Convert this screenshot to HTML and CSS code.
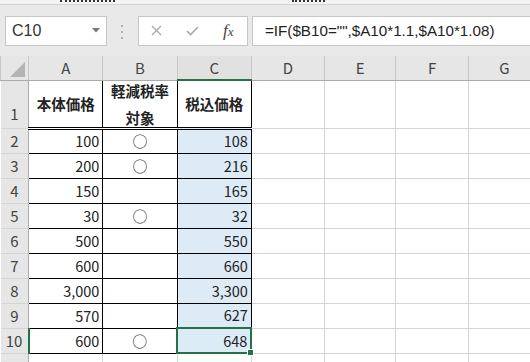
FILE: index.html
```html
<!DOCTYPE html>
<html lang="ja">
<head>
  <meta charset="UTF-8" />
  <title>税込価格</title>
  <link rel="stylesheet" href="styles.css">
</head>
<body>
  <div class="ribbon-edge">
    <span class="cut cut-left"></span>
    <span class="cut cut-right"></span>
  </div>

  <div class="formula-bar">
    <div class="name-box">
      <span>C10</span>
      <svg class="caret" width="8" height="5" viewBox="0 0 8 5"><path d="M0 0 H8 L4 4.5 Z" fill="#777"/></svg>
    </div>
    <div class="grip">
      <svg width="3" height="14" viewBox="0 0 3 14"><rect x="0" y="0" width="2" height="2" fill="#b3b3b3"/><rect x="0" y="6" width="2" height="2" fill="#b3b3b3"/><rect x="0" y="12" width="2" height="2" fill="#b3b3b3"/></svg>
    </div>
    <div class="fx-buttons">
      <svg width="11" height="11" viewBox="0 0 11 11"><path d="M1 1 L10 10 M10 1 L1 10" stroke="#a9a9a9" stroke-width="1.3"/></svg>
      <svg width="13" height="10" viewBox="0 0 13 10"><path d="M1 5 L4.5 8.5 L12 1" stroke="#a9a9a9" stroke-width="1.6" fill="none"/></svg>
      <span class="fx">f<i>x</i></span>
    </div>
    <div class="formula-input">=IF($B10="",$A10*1.1,$A10*1.08)</div>
  </div>

  <table class="sheet">
    <colgroup>
      <col class="col-head">
      <col class="col-a"><col class="col-b"><col class="col-c">
      <col class="col-d"><col class="col-e"><col class="col-f"><col class="col-g">
    </colgroup>
    <thead>
      <tr>
        <th class="corner"><div class="tri"></div></th>
        <th>A</th><th>B</th><th class="sel">C</th><th>D</th><th>E</th><th>F</th><th>G</th>
      </tr>
    </thead>
    <tbody id="rows">
      <tr class="title-row">
        <th class="row-num bottom">1</th>
        <td class="box title">本体価格</td>
        <td class="box title"><span class="wrap">軽減税率<br>対象</span></td>
        <td class="box title">税込価格</td>
        <td></td><td></td><td></td><td></td>
      </tr>
    </tbody>
  </table>

  <script>
    const items = [
      { price: 100, reduced: true },
      { price: 200, reduced: true },
      { price: 150, reduced: false },
      { price: 30, reduced: true },
      { price: 500, reduced: false },
      { price: 600, reduced: false },
      { price: 3000, reduced: false },
      { price: 570, reduced: false },
      { price: 600, reduced: true }
    ];

    const rows = document.getElementById("rows");

    items.forEach((item, i) => {
      const rowNo = i + 2;
      const taxed = Math.round(item.price * (item.reduced ? 1.08 : 1.1));
      const tr = document.createElement("tr");
      const active = rowNo === 10;
      tr.innerHTML = `
        <th class="row-num${active ? " active" : ""}">${rowNo}</th>
        <td class="box num">${item.price.toLocaleString()}</td>
        <td class="box mark">${item.reduced ? "○" : ""}</td>
        <td class="box num taxed${active ? " current" : ""}">${taxed.toLocaleString()}${active ? '<div class="handle"></div>' : ""}</td>
        <td></td><td></td><td></td><td></td>
      `;
      rows.appendChild(tr);
    });

    // empty row peeking in below the data
    const tail = document.createElement("tr");
    tail.innerHTML = `<th class="row-num"></th><td></td><td></td><td></td><td></td><td></td><td></td><td></td>`;
    rows.appendChild(tail);
  </script>
</body>
</html>
```

FILE: styles.css
```css
html, body {
  margin: 0;
  padding: 0;
  overflow: hidden;
  height: 362px;
  background: #e9e9e9;
  font-family: "Noto Sans CJK JP", "Noto Sans", sans-serif;
  color: #222;
}
.ribbon-edge {
  height: 4px;
  background: #f3f3f3;
  border-bottom: 1px solid #d2d2d2;
  position: relative;
  overflow: hidden;
}
/* bottoms of the ribbon labels, cut off by the screenshot */
.cut {
  position: absolute;
  top: 0;
  height: 2px;
  border-top: 2px dotted #333;
}
.cut-left { left: 60px; width: 55px; }
.cut-right { left: 292px; width: 33px; }
.formula-bar {
  display: flex;
  align-items: center;
  height: 51px;
  padding-left: 5px;
}
.name-box {
  background: #fff;
  border: 1px solid #c6c6c6;
  display: flex;
  align-items: center;
  justify-content: space-between;
  padding: 0 6px;
  box-sizing: border-box;
  width: 102px;
  height: 30px;
  font-family: "Liberation Sans", sans-serif;
  font-size: 16px;
  color: #333;
}
.name-box span { padding-top: 1px; }
.grip {
  width: 31px;
  display: flex;
  justify-content: center;
  padding-top: 2px;
}
.fx-buttons {
  width: 110px;
  height: 30px;
  box-sizing: border-box;
  background: #fff;
  border: 1px solid #c6c6c6;
  display: flex;
  align-items: center;
  gap: 24px;
  padding-left: 12px;
}
.fx {
  font-family: "Liberation Serif", serif;
  font-style: italic;
  font-size: 17px;
  color: #444;
}
.fx i { font-size: 13px; }
.formula-input {
  margin-left: 4px;
  flex: 1;
  height: 30px;
  box-sizing: border-box;
  background: #fff;
  border: 1px solid #c6c6c6;
  border-right: none;
  padding-left: 12px;
  line-height: 28px;
  font-family: "Liberation Sans", sans-serif;
  font-size: 15.2px;
  color: #222;
  white-space: nowrap;
}

.sheet {
  border-collapse: collapse;
  table-layout: fixed;
  width: 541px;
  background: #fff;
}
.col-head { width: 28px; }
.col-a, .col-b, .col-c { width: 74px; }
.col-d { width: 73px; }
.col-e { width: 71px; }
.col-f, .col-g { width: 72px; }

.sheet th {
  background: #e6e6e6;
  font-weight: normal;
  color: #444;
  font-size: 15px;
  padding: 0;
}
.sheet thead th {
  height: 23px;
  border-left: 1px solid #c8c8c8;
  border-right: 1px solid #c8c8c8;
  border-bottom: 1px solid #ababab;
}
.sheet thead th.sel {
  border-bottom: 2px solid #217346;
  background: #e1e1e1;
}
.corner { position: relative; }
.tri {
  position: absolute;
  right: 3px;
  bottom: 3px;
  width: 0;
  height: 0;
  border-left: 15px solid transparent;
  border-bottom: 15px solid #b4b4b4;
}
.row-num {
  border-right: 1px solid #ababab;
  border-bottom: 1px solid #d4d4d4;
  text-align: center;
}
.row-num.bottom {
  vertical-align: bottom;
  padding-bottom: 4px !important;
}
.row-num.active { border-right: 2px solid #217346; }

.sheet td {
  border: 1px solid #d4d4d4;
  height: 23px;
  padding: 0 3px;
  font-size: 14.5px;
  line-height: 18px;
}
.sheet tbody tr { height: 25px; }
.sheet .title-row { height: 46px; }
.sheet .title-row td { height: 44px; }
.sheet td.box { border: 1px solid #000; }
.sheet .title-row td.box {
  border-bottom: 3px double #000;
}
.title {
  text-align: center;
  font-weight: bold;
  padding: 0 !important;
}
.wrap {
  display: block;
  line-height: 27px;
  margin: -4px 0;
}
.num { text-align: right; }
.mark { text-align: center; font-size: 15px !important; color: #333; }
.taxed { background: #ddebf7; }
.sheet td.current {
  border: 2px solid #217346;
  position: relative;
}
.handle {
  position: absolute;
  right: -4px;
  bottom: -4px;
  width: 5px;
  height: 5px;
  background: #217346;
  border: 1px solid #fff;
}
```
